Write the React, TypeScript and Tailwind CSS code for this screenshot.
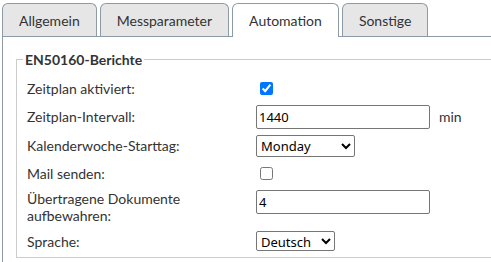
import React from "react";

const tabs = ["Allgemein", "Messparameter", "Automation", "Sonstige"];

export default function App() {
  const active = "Automation";
  return (
    <div className="w-[491px] h-[262px] overflow-hidden bg-white font-['Lato',sans-serif] text-[14px] text-[#333]">
      <div className="w-[540px] pt-[2px] pl-[2px]">
        {/* tabs */}
        <div className="flex items-end gap-[3px] h-[34px]">
          {tabs.map((t) => (
            <div
              key={t}
              className={
                t === active
                  ? "h-[34px] px-4 flex items-center border border-b-0 border-[#8e9ba7] rounded-t-[6px] bg-white relative z-10 -mb-px pb-px"
                  : "h-[33px] px-4 flex items-center border border-b-0 border-[#8e9ba7] rounded-t-[6px] bg-[#e6e6e6]"
              }
            >
              {t}
            </div>
          ))}
        </div>

        {/* panel */}
        <div className="border-t border-l border-[#8e9ba7] pl-[13px] pt-[14px] h-[240px]">
          <fieldset className="border border-[#cccccc] px-[10px] pb-0">
            <legend className="-ml-[4px] px-[2px] font-bold leading-[17px]">EN50160-Berichte</legend>
            <div className="pt-[6px]">
              <div className="flex items-center h-[28px]">
                <span className="w-[229px]">Zeitplan aktiviert:</span>
                <input type="checkbox" defaultChecked className="ml-[4px] w-[13px] h-[13px]" />
              </div>
              <div className="flex items-center h-[29px]">
                <span className="w-[229px]">Zeitplan-Intervall:</span>
                <input
                  type="text"
                  defaultValue="1440"
                  className="w-[174px] h-[24px] px-[2px] border border-[#767676] rounded-[2px] font-['Noto_Sans',sans-serif] text-[13px] text-black"
                />
                <span className="ml-[9px]">min</span>
              </div>
              <div className="flex items-center h-[29px]">
                <span className="w-[229px]">Kalenderwoche-Starttag:</span>
                <select className="w-[99px] h-[22px] border border-[#767676] rounded-[2px] font-['Noto_Sans',sans-serif] text-[13px] text-black">
                  <option>Monday</option>
                </select>
              </div>
              <div className="flex items-center h-[27px]">
                <span className="w-[229px]">Mail senden:</span>
                <input type="checkbox" className="ml-[4px] w-[13px] h-[13px]" />
              </div>
              <div className="flex items-start h-[38px] pt-[3px]">
                <span className="w-[229px] leading-[17px]">
                  Übertragene Dokumente
                  <br />
                  aufbewahren:
                </span>
                <input
                  type="text"
                  defaultValue="4"
                  className="w-[174px] h-[24px] px-[2px] border border-[#767676] rounded-[2px] font-['Noto_Sans',sans-serif] text-[13px] text-black"
                />
              </div>
              <div className="flex items-center h-[32px]">
                <span className="w-[229px]">Sprache:</span>
                <select className="w-[79px] h-[20px] border border-[#767676] rounded-[2px] font-['Noto_Sans',sans-serif] text-[13px] text-black">
                  <option>Deutsch</option>
                </select>
              </div>
            </div>
          </fieldset>
        </div>
      </div>
    </div>
  );
}
